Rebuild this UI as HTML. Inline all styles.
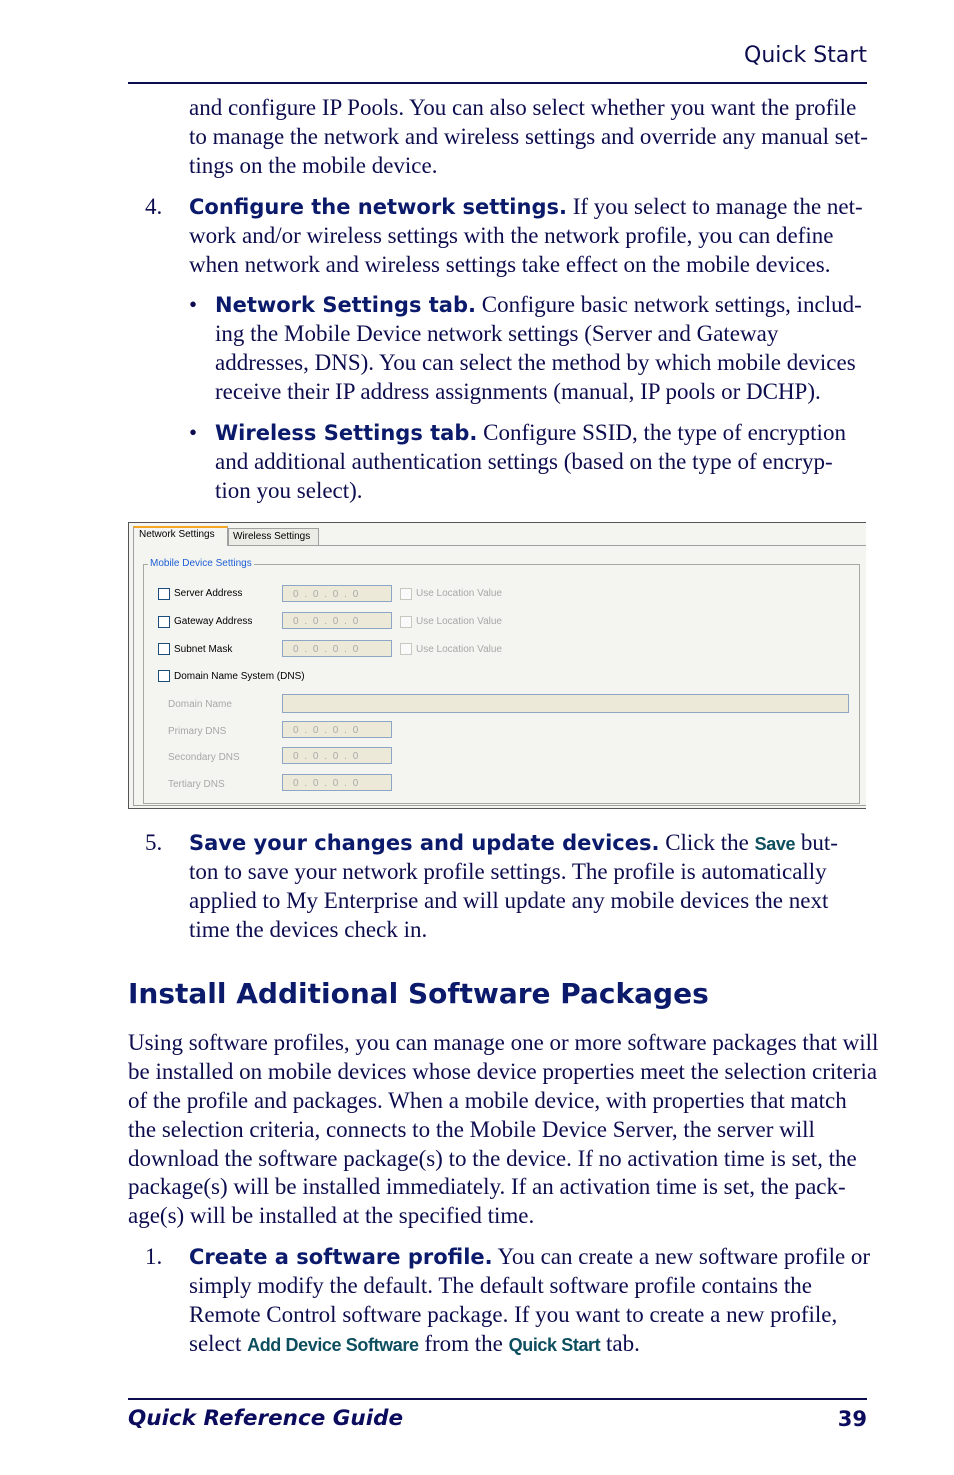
<!DOCTYPE html>
<html><head><meta charset="utf-8"><style>
body{margin:0;width:954px;height:1475px;background:#fff;position:relative;overflow:hidden;color:#0c0c4e}
.l{position:absolute;white-space:nowrap;font-family:"Liberation Serif",serif;font-size:23px;line-height:28px;height:28px}
.h{font-family:"DejaVu Sans",sans-serif;font-weight:bold;font-size:21px;color:#0b1a6a}
.c{font-family:"Liberation Sans",sans-serif;font-weight:bold;color:#0d4f5f;font-size:18px;letter-spacing:-0.4px}
.rule{position:absolute;left:128px;width:739px;height:1.5px;background:#0c0c4e}
.ss{position:absolute;font-family:"Liberation Sans",sans-serif;font-size:10px;white-space:nowrap}
.cb{position:absolute;width:10px;height:10px;border:1px solid #1c4c7a;background:#fff}
.cbd{position:absolute;width:10px;height:10px;border:1px solid #c8c8c0;background:#fafafa}
.ip{position:absolute;width:110px;height:17px;border:1px solid #8ea6c6;background:#ece9d8;font-family:"Liberation Sans",sans-serif;font-size:10px;color:#aaa;line-height:17px;word-spacing:3px;padding-left:10px;box-sizing:border-box;overflow:hidden;white-space:nowrap}
.g{color:#a8a8a8}
</style></head><body>
<div class="l" style="right:87px;top:42px;font-family:'DejaVu Sans',sans-serif;font-size:22px;color:#0c0c4e">Quick Start</div>
<div class="rule" style="top:82px"></div>

<div class="l" style="left:189px;top:94px">and configure IP Pools. You can also select whether you want the profile</div>
<div class="l" style="left:189px;top:123px">to manage the network and wireless settings and override any manual set-</div>
<div class="l" style="left:189px;top:152px">tings on the mobile device.</div>

<div class="l" style="left:145px;top:193px">4.</div>
<div class="l" style="left:189px;top:193px"><span class="h">Configure the network settings.</span> If you select to manage the net-</div>
<div class="l" style="left:189px;top:222px">work and/or wireless settings with the network profile, you can define</div>
<div class="l" style="left:189px;top:251px">when network and wireless settings take effect on the mobile devices.</div>

<div class="l" style="left:189px;top:291px">•</div>
<div class="l" style="left:215px;top:291px"><span class="h">Network Settings tab.</span> Configure basic network settings, includ-</div>
<div class="l" style="left:215px;top:320px">ing the Mobile Device network settings (Server and Gateway</div>
<div class="l" style="left:215px;top:349px">addresses, DNS). You can select the method by which mobile devices</div>
<div class="l" style="left:215px;top:378px">receive their IP address assignments (manual, IP pools or DCHP).</div>

<div class="l" style="left:189px;top:419px">•</div>
<div class="l" style="left:215px;top:419px"><span class="h">Wireless Settings tab.</span> Configure SSID, the type of encryption</div>
<div class="l" style="left:215px;top:448px">and additional authentication settings (based on the type of encryp-</div>
<div class="l" style="left:215px;top:477px">tion you select).</div>

<!-- screenshot -->
<div style="position:absolute;left:128px;top:522px;width:738px;height:287px;border-left:1px solid #555;border-top:1px solid #555;border-bottom:1px solid #555;background:#f4f4f0;box-sizing:border-box"></div>
<div style="position:absolute;left:133px;top:545px;width:733px;height:261px;border:1px solid #a0a0a0;border-right:none;background:#f4f4f0;box-sizing:border-box"></div>
<div style="position:absolute;left:133px;top:526px;width:95px;height:20px;border:1px solid #a0a0a0;border-bottom:none;border-top:2px solid #f5a623;background:#f4f4f0;box-sizing:border-box"></div>
<div class="ss" style="left:139px;top:529px;color:#000">Network Settings</div>
<div style="position:absolute;left:228px;top:528px;width:91px;height:17px;border:1px solid #a0a0a0;border-bottom:none;background:#ecece6;box-sizing:border-box"></div>
<div class="ss" style="left:233px;top:531px;color:#000">Wireless Settings</div>
<div style="position:absolute;left:143px;top:564px;width:717px;height:240px;border:1px solid #a8a8a0;box-sizing:border-box"></div>
<div class="ss" style="left:148px;top:558px;color:#1d5fd6;background:#f4f4f0;padding:0 2px">Mobile Device Settings</div>

<div class="cb" style="left:158px;top:588px"></div><div class="ss" style="left:174px;top:588px;color:#000">Server Address</div>
<div class="ip" style="left:282px;top:585px">0 . 0 . 0 . 0</div>
<div class="cbd" style="left:400px;top:588px"></div><div class="ss g" style="left:416px;top:588px">Use Location Value</div>
<div class="cb" style="left:158px;top:616px"></div><div class="ss" style="left:174px;top:616px;color:#000">Gateway Address</div>
<div class="ip" style="left:282px;top:612px">0 . 0 . 0 . 0</div>
<div class="cbd" style="left:400px;top:616px"></div><div class="ss g" style="left:416px;top:616px">Use Location Value</div>
<div class="cb" style="left:158px;top:643px"></div><div class="ss" style="left:174px;top:644px;color:#000">Subnet Mask</div>
<div class="ip" style="left:282px;top:640px">0 . 0 . 0 . 0</div>
<div class="cbd" style="left:400px;top:643px"></div><div class="ss g" style="left:416px;top:644px">Use Location Value</div>
<div class="cb" style="left:158px;top:670px"></div><div class="ss" style="left:174px;top:671px;color:#000">Domain Name System (DNS)</div>
<div class="ss g" style="left:168px;top:699px">Domain Name</div>
<div class="ip" style="left:282px;top:694px;width:567px;height:19px"></div>
<div class="ss g" style="left:168px;top:726px">Primary DNS</div>
<div class="ip" style="left:282px;top:721px">0 . 0 . 0 . 0</div>
<div class="ss g" style="left:168px;top:752px">Secondary DNS</div>
<div class="ip" style="left:282px;top:747px">0 . 0 . 0 . 0</div>
<div class="ss g" style="left:168px;top:779px">Tertiary DNS</div>
<div class="ip" style="left:282px;top:774px">0 . 0 . 0 . 0</div>

<div class="l" style="left:145px;top:829px">5.</div>
<div class="l" style="left:189px;top:829px"><span class="h">Save your changes and update devices.</span> Click the <span class="c">Save</span> but-</div>
<div class="l" style="left:189px;top:858px">ton to save your network profile settings. The profile is automatically</div>
<div class="l" style="left:189px;top:887px">applied to My Enterprise and will update any mobile devices the next</div>
<div class="l" style="left:189px;top:916px">time the devices check in.</div>

<div class="l" style="left:128px;top:975px;height:38px;line-height:38px;font-family:'DejaVu Sans',sans-serif;font-weight:bold;font-size:28px;color:#0b1a6a">Install Additional Software Packages</div>

<div class="l" style="left:128px;top:1029px">Using software profiles, you can manage one or more software packages that will</div>
<div class="l" style="left:128px;top:1058px">be installed on mobile devices whose device properties meet the selection criteria</div>
<div class="l" style="left:128px;top:1087px">of the profile and packages. When a mobile device, with properties that match</div>
<div class="l" style="left:128px;top:1116px">the selection criteria, connects to the Mobile Device Server, the server will</div>
<div class="l" style="left:128px;top:1145px">download the software package(s) to the device. If no activation time is set, the</div>
<div class="l" style="left:128px;top:1173px">package(s) will be installed immediately. If an activation time is set, the pack-</div>
<div class="l" style="left:128px;top:1202px">age(s) will be installed at the specified time.</div>

<div class="l" style="left:145px;top:1243px">1.</div>
<div class="l" style="left:189px;top:1243px"><span class="h">Create a software profile.</span> You can create a new software profile or</div>
<div class="l" style="left:189px;top:1272px">simply modify the default. The default software profile contains the</div>
<div class="l" style="left:189px;top:1301px">Remote Control software package. If you want to create a new profile,</div>
<div class="l" style="left:189px;top:1330px">select <span class="c">Add Device Software</span> from the <span class="c">Quick Start</span> tab.</div>

<div class="rule" style="top:1398px"></div>
<div class="l" style="left:128px;top:1405px;font-family:'DejaVu Sans',sans-serif;font-weight:bold;font-style:italic;font-size:21.5px;color:#0c0c5e">Quick Reference Guide</div>
<div class="l" style="right:87px;top:1405px;font-family:'DejaVu Sans',sans-serif;font-weight:bold;font-size:21px;color:#0c0c5e">39</div>
</body></html>
